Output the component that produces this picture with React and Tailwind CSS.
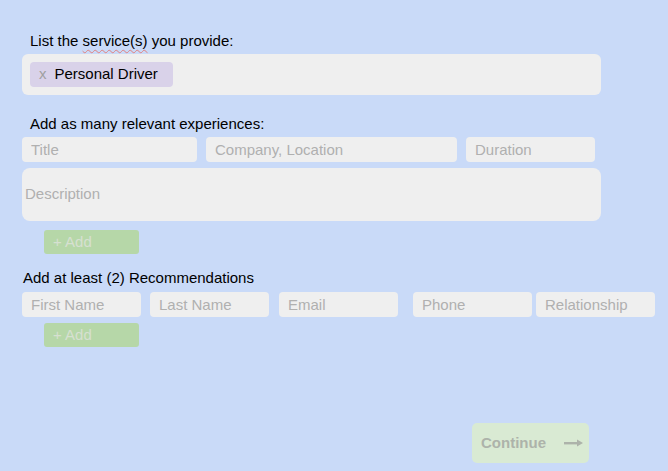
const inputBase =
  "h-[25px] rounded-[4px] bg-[#efefef] pl-[9px] text-[15px] text-[#444] placeholder:text-[#b0b0b0] outline-none border-none";

const AddButton = () => (
  <button
    type="button"
    className="ml-[44px] flex h-[24px] w-[95px] items-center rounded-[3px] bg-[#b6d7a8] pl-[9px] text-[15px] text-[#d6e0d1]"
  >
    + Add
  </button>
);

const App = () => {
  return (
    <div className="min-h-[471px] w-full bg-[#c9daf8] pt-[32px] text-[15px] text-black font-['Liberation_Sans',Arial,sans-serif]">
      <p className="ml-[30px] h-[17px] leading-[17px]">
        List the{" "}
        <span className="underline decoration-wavy decoration-[#e08080] decoration-[1px] underline-offset-[3px]">
          service(s)
        </span>{" "}
        you provide:
      </p>
      <div className="ml-[22px] mt-[5px] flex h-[41px] w-[579px] items-center rounded-[6px] bg-[#efefef] pl-[8px]">
        <span className="flex h-[25px] w-[143px] items-center rounded-[4px] bg-[#d9d2e9] pl-[9px]">
          <span className="text-[#a0a0a0]">x</span>
          <span className="ml-[8px]">Personal Driver</span>
        </span>
      </div>

      <p className="ml-[30px] mt-[20px] h-[17px] leading-[17px]">Add as many relevant experiences:</p>
      <div className="ml-[22px] mt-[5px] flex">
        <input className={`${inputBase} h-[24px] w-[175px]`} placeholder="Title" />
        <input className={`${inputBase} ml-[9px] h-[24px] w-[251px]`} placeholder="Company, Location" />
        <input className={`${inputBase} ml-[9px] h-[24px] w-[129px]`} placeholder="Duration" />
      </div>
      <textarea
        className="ml-[22px] mt-[6px] block h-[53px] w-[579px] resize-none rounded-[8px] bg-[#efefef] pl-[3px] pt-[17px] text-[15px] leading-[18px] text-[#444] placeholder:text-[#b0b0b0] outline-none"
        placeholder="Description"
      />
      <div className="mt-[9px]">
        <AddButton />
      </div>

      <p className="ml-[23px] mt-[15px] h-[17px] leading-[17px]">Add at least (2) Recommendations</p>
      <div className="ml-[22px] mt-[6px] flex">
        <input className={`${inputBase} w-[119px]`} placeholder="First Name" />
        <input className={`${inputBase} ml-[9px] w-[119px]`} placeholder="Last Name" />
        <input className={`${inputBase} ml-[10px] w-[119px]`} placeholder="Email" />
        <input className={`${inputBase} ml-[15px] w-[119px]`} placeholder="Phone" />
        <input className={`${inputBase} ml-[4px] w-[119px]`} placeholder="Relationship" />
      </div>
      <div className="mt-[6px]">
        <AddButton />
      </div>

      <div className="mt-[76px] flex pb-[8px]">
        <button
          type="button"
          className="ml-[472px] flex h-[40px] w-[117px] items-center rounded-[5px] bg-[#d9ead3] pl-[9px] text-[15px] font-bold text-[#adb3aa]"
        >
          Continue
          <svg className="ml-[18px]" width="19" height="8" viewBox="0 0 19 8">
            <rect x="0" y="3" width="14" height="2.4" fill="#adb3aa" />
            <path d="M13 0.5 L19 4 L13 7.5 Z" fill="#adb3aa" />
          </svg>
        </button>
      </div>
    </div>
  );
};

export default App;
